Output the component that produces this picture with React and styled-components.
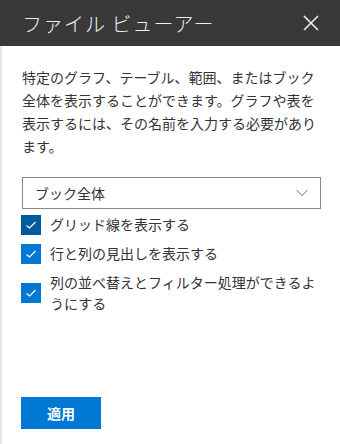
import React from 'react';
import styled, { createGlobalStyle } from 'styled-components';

const GlobalStyle = createGlobalStyle`
  html, body {
    margin: 0;
    padding: 0;
    background: #fff;
  }
  body {
    font-family: "Noto Sans CJK JP", "Noto Sans", sans-serif;
    color: #333;
  }
`;

const Panel = styled.div`
  width: 340px;
  height: 444px;
  display: flex;
  flex-direction: column;
  background: #fff;
`;

const Header = styled.header`
  height: 46px;
  flex-shrink: 0;
  background: #393939;
  display: flex;
  align-items: center;
  justify-content: space-between;
  padding: 0 21px 0 22px;
  box-sizing: border-box;
`;

const Title = styled.h1`
  margin: 0;
  font-size: 20px;
  font-weight: 300;
  color: #eeeeee;
  letter-spacing: 1px;
`;

const CloseButton = styled.button`
  border: none;
  background: none;
  padding: 0;
  width: 16px;
  height: 16px;
  display: flex;
  cursor: pointer;
`;

const Body = styled.div`
  flex: 1;
  display: flex;
  flex-direction: column;
  border-left: 2px solid #e6e6e6;
  padding: 20px 19px 15px 20px;
`;

const Description = styled.p`
  margin: 0 0 19px;
  font-size: 14px;
  line-height: 23px;
  color: #333;
`;

const Select = styled.div`
  height: 32px;
  box-sizing: border-box;
  border: 1px solid #8a8886;
  display: flex;
  align-items: center;
  justify-content: space-between;
  padding: 0 12px;
  font-size: 14px;
  color: #333;
`;

const Options = styled.div`
  margin-top: 5px;
  display: flex;
  flex-direction: column;
  gap: 8px;
`;

const Row = styled.label`
  display: flex;
  align-items: center;
  gap: 9px;
  margin-left: -1px;
  font-size: 14px;
  line-height: 21px;
  color: #333;
`;

const Box = styled.span`
  width: 20px;
  height: 20px;
  flex-shrink: 0;
  display: flex;
  align-items: center;
  justify-content: center;
  background: ${(p) => (p.$focused ? '#005a9e' : '#0078d4')};
`;

const ApplyButton = styled.button`
  margin-top: auto;
  width: 80px;
  height: 32px;
  margin-left: -1px;
  border: none;
  background: #0078d4;
  color: #fff;
  font-family: "Noto Sans CJK JP", sans-serif;
  font-size: 14px;
  font-weight: 700;
  cursor: pointer;
`;

const Check = () => (
  <svg width="12" height="12" viewBox="0 0 12 12">
    <path d="M1.5 6.5 L4.5 9 L10.5 3" fill="none" stroke="#fff" strokeWidth="1.1" />
  </svg>
);

const options = [
  { label: 'グリッド線を表示する', focused: true },
  { label: '行と列の見出しを表示する' },
  { label: '列の並べ替えとフィルター処理ができるようにする' },
];

export default function App() {
  return (
    <>
      <GlobalStyle />
      <Panel>
        <Header>
          <Title>ファイル ビューアー</Title>
          <CloseButton aria-label="閉じる">
            <svg width="16" height="16" viewBox="0 0 16 16">
              <path d="M1 1 L15 15 M15 1 L1 15" stroke="#f2f2f2" strokeWidth="1.5" />
            </svg>
          </CloseButton>
        </Header>
        <Body>
          <Description>
            特定のグラフ、テーブル、範囲、またはブック全体を表示することができます。グラフや表を表示するには、その名前を入力する必要があります。
          </Description>
          <Select>
            <span>ブック全体</span>
            <svg width="12" height="8" viewBox="0 0 12 8">
              <path d="M0.5 1 L6 6.5 L11.5 1" fill="none" stroke="#666" strokeWidth="1" />
            </svg>
          </Select>
          <Options>
            {options.map((o) => (
              <Row key={o.label}>
                <Box $focused={o.focused}>
                  <Check />
                </Box>
                <span>{o.label}</span>
              </Row>
            ))}
          </Options>
          <ApplyButton>適用</ApplyButton>
        </Body>
      </Panel>
    </>
  );
}
